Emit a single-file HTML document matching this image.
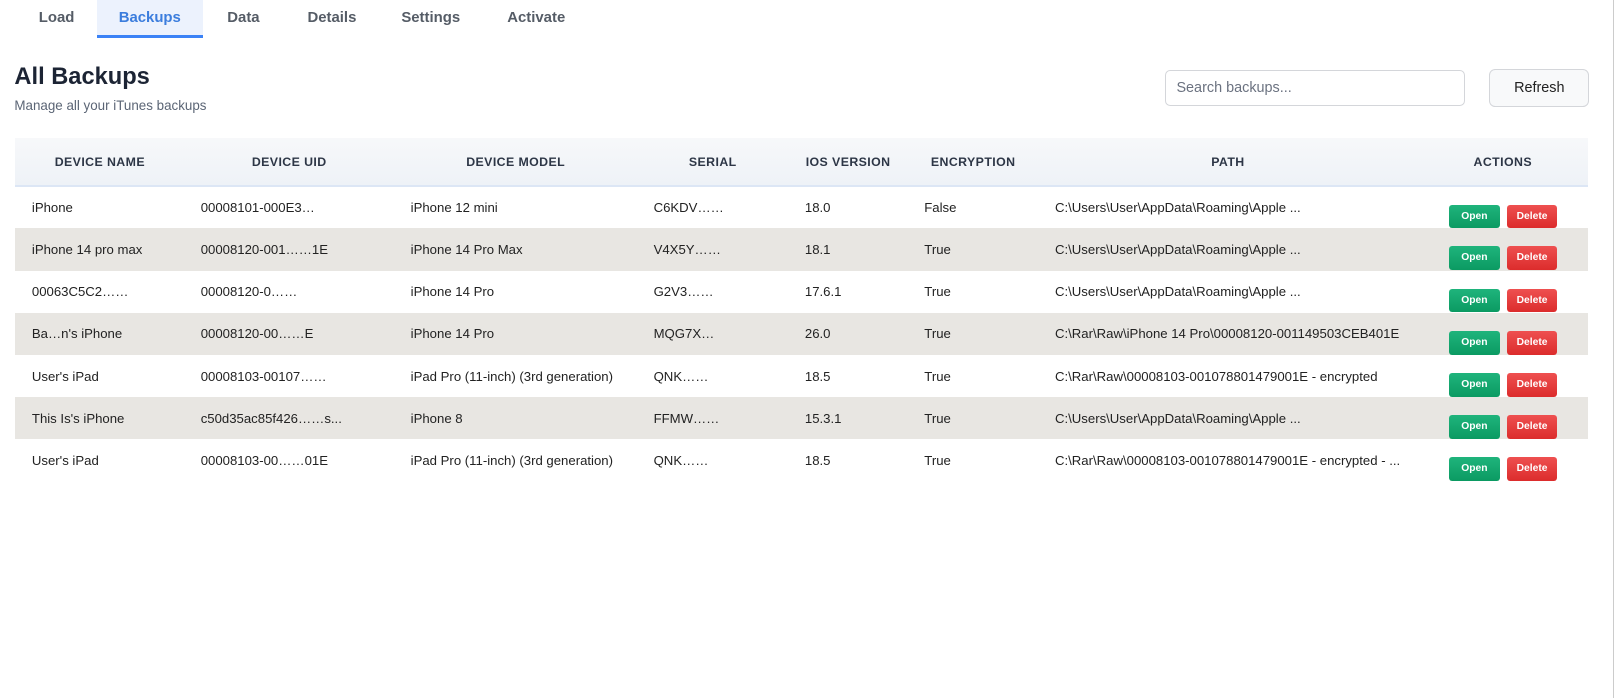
<!DOCTYPE html>
<html><head><meta charset="utf-8"><style>
*{box-sizing:border-box;margin:0;padding:0}
body{width:1614px;height:698px;background:#fff;font-family:"Liberation Sans",sans-serif;color:#222;position:relative;overflow:hidden}
.wrap{position:absolute;left:0;top:0;width:1568px;height:678px;zoom:1.0293}
.vline{position:absolute;right:0;top:0;width:1px;height:698px;background:#ccc}
.tabs{position:absolute;top:0;left:16px;height:37px;display:flex}
.tab{height:37px;line-height:35px;font-size:14.5px;font-weight:bold;color:#555c66;text-align:center}
.tab.on{background:#ecf2fd;color:#3b7ddd;border-bottom:3px solid #3b82f6}
h1{position:absolute;left:14px;top:62px;font-size:23px;font-weight:bold;color:#1c2434}
.sub{position:absolute;left:14px;top:95px;font-size:13px;color:#5b6575}
.search{position:absolute;left:1132px;top:68px;width:291px;height:35px;border:1px solid #d4d6da;border-radius:5px;font-size:14px;color:#6b7280;padding:9px 10px}
.refresh{position:absolute;left:1447px;top:67px;width:97px;height:37px;border:1px solid #d4d6da;border-radius:6px;background:#f8f9fa;font-size:14px;color:#222;text-align:center;line-height:35px}
table{position:absolute;left:15px;top:134px;width:1528px;border-collapse:collapse;font-size:12.8px}
th{height:47px;background:linear-gradient(#f7f8fa,#eef2f7);border-bottom:2px solid #dce6f5;font-size:12px;font-weight:bold;color:#2d3646;letter-spacing:.4px;text-align:center}
td{height:41px;padding:0;white-space:nowrap;color:#222}
tr.g td{background:#e8e6e2}
.b{display:inline-block;height:23px;line-height:23px;font-size:10px;font-weight:bold;color:#fff;border-radius:3px;text-align:center;width:49px;margin-top:17px;vertical-align:top}
.o{background:linear-gradient(#1fb47c,#0b9a62)}
.d{background:linear-gradient(#ee5050,#dc2c2c);margin-left:7px}
td:last-child{padding-left:31px !important}
</style></head><body>
<div class="vline"></div>
<div class="wrap">
<div class="tabs">
<div class="tab" style="width:78px">Load</div>
<div class="tab on" style="width:103px">Backups</div>
<div class="tab" style="width:79px">Data</div>
<div class="tab" style="width:93px">Details</div>
<div class="tab" style="width:99px">Settings</div>
<div class="tab" style="width:106px">Activate</div>
</div>
<h1>All Backups</h1>
<div class="sub">Manage all your iTunes backups</div>
<div class="search">Search backups...</div>
<div class="refresh">Refresh</div>
<table>
<colgroup><col style="width:164px"><col style="width:204px"><col style="width:236px"><col style="width:147px"><col style="width:116px"><col style="width:127px"><col style="width:368px"><col></colgroup>
<tr><th>DEVICE NAME</th><th>DEVICE UID</th><th>DEVICE MODEL</th><th>SERIAL</th><th>IOS VERSION</th><th>ENCRYPTION</th><th>PATH</th><th>ACTIONS</th></tr>
<tr><td style="padding-left:16px">iPhone</td><td style="padding-left:16px">00008101-000E3…</td><td style="padding-left:16px">iPhone 12 mini</td><td style="padding-left:16px">C6KDV……</td><td style="padding-left:16px">18.0</td><td style="padding-left:16px">False</td><td style="padding-left:16px">C:\Users\User\AppData\Roaming\Apple ...</td><td><span class="b o">Open</span><span class="b d">Delete</span></td></tr>
<tr class="g"><td style="padding-left:16px">iPhone 14 pro max</td><td style="padding-left:16px">00008120-001……1E</td><td style="padding-left:16px">iPhone 14 Pro Max</td><td style="padding-left:16px">V4X5Y……</td><td style="padding-left:16px">18.1</td><td style="padding-left:16px">True</td><td style="padding-left:16px">C:\Users\User\AppData\Roaming\Apple ...</td><td><span class="b o">Open</span><span class="b d">Delete</span></td></tr>
<tr><td style="padding-left:16px">00063C5C2……</td><td style="padding-left:16px">00008120-0……</td><td style="padding-left:16px">iPhone 14 Pro</td><td style="padding-left:16px">G2V3……</td><td style="padding-left:16px">17.6.1</td><td style="padding-left:16px">True</td><td style="padding-left:16px">C:\Users\User\AppData\Roaming\Apple ...</td><td><span class="b o">Open</span><span class="b d">Delete</span></td></tr>
<tr class="g"><td style="padding-left:16px">Ba…n's iPhone</td><td style="padding-left:16px">00008120-00……E</td><td style="padding-left:16px">iPhone 14 Pro</td><td style="padding-left:16px">MQG7X…</td><td style="padding-left:16px">26.0</td><td style="padding-left:16px">True</td><td style="padding-left:16px">C:\Rar\Raw\iPhone 14 Pro\00008120-001149503CEB401E</td><td><span class="b o">Open</span><span class="b d">Delete</span></td></tr>
<tr><td style="padding-left:16px">User's iPad</td><td style="padding-left:16px">00008103-00107……</td><td style="padding-left:16px">iPad Pro (11-inch) (3rd generation)</td><td style="padding-left:16px">QNK……</td><td style="padding-left:16px">18.5</td><td style="padding-left:16px">True</td><td style="padding-left:16px">C:\Rar\Raw\00008103-001078801479001E - encrypted</td><td><span class="b o">Open</span><span class="b d">Delete</span></td></tr>
<tr class="g"><td style="padding-left:16px">This Is's iPhone</td><td style="padding-left:16px">c50d35ac85f426……s...</td><td style="padding-left:16px">iPhone 8</td><td style="padding-left:16px">FFMW……</td><td style="padding-left:16px">15.3.1</td><td style="padding-left:16px">True</td><td style="padding-left:16px">C:\Users\User\AppData\Roaming\Apple ...</td><td><span class="b o">Open</span><span class="b d">Delete</span></td></tr>
<tr><td style="padding-left:16px">User's iPad</td><td style="padding-left:16px">00008103-00……01E</td><td style="padding-left:16px">iPad Pro (11-inch) (3rd generation)</td><td style="padding-left:16px">QNK……</td><td style="padding-left:16px">18.5</td><td style="padding-left:16px">True</td><td style="padding-left:16px">C:\Rar\Raw\00008103-001078801479001E - encrypted - ...</td><td><span class="b o">Open</span><span class="b d">Delete</span></td></tr>
</table>
</div>
</body></html>
